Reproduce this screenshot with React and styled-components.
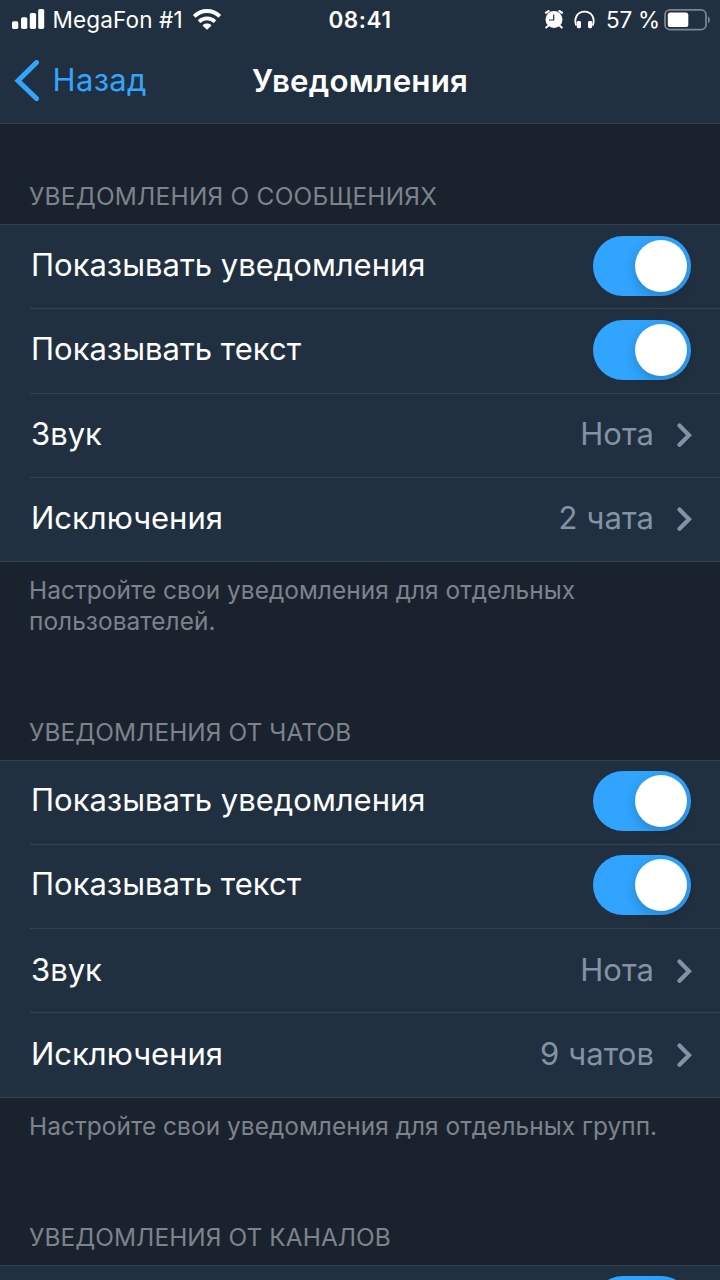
import React from "react";
import styled, { createGlobalStyle } from "styled-components";

const GlobalStyle = createGlobalStyle`
  * { box-sizing: border-box; }
  html, body { margin: 0; background: #1a232d; }
  body {
    font-family: Inter, "Liberation Sans", sans-serif;
    font-feature-settings: "calt" 0;
    -webkit-font-smoothing: antialiased;
  }
`;

const Screen = styled.main`
  width: 720px;
  height: 1280px;
  overflow: hidden;
  background: #1a232d;
  color: #fff;
`;

const Header = styled.header`
  height: 124px;
  background: #213040;
  border-bottom: 1px solid #344352;
`;

const StatusBar = styled.div`
  display: grid;
  grid-template-columns: 1fr auto 1fr;
  align-items: center;
  height: 40px;
  padding: 0 10px;
  font-size: 22.5px;
  line-height: 28px;
`;

const StatusGroup = styled.div`
  display: flex;
  align-items: center;
  justify-content: ${(p) => (p.$end ? "flex-end" : "flex-start")};
  margin-right: ${(p) => (p.$end ? -1 : 0)}px;
`;

const StatusText = styled.span`
  white-space: nowrap;
  margin-left: ${(p) => p.$gap || 0}px;
  letter-spacing: ${(p) => p.$spacing || 0}px;
`;

const Clock = styled.time`
  font-weight: 600;
  letter-spacing: 0.6px;
`;

const Icon = styled.svg`
  display: block;
  flex: none;
  margin-left: ${(p) => p.$gap || 0}px;
`;

const NavBar = styled.nav`
  display: grid;
  grid-template-columns: 1fr auto 1fr;
  align-items: center;
  height: 82px;
  padding: 0 14px;
`;

const BackButton = styled.button`
  display: flex;
  align-items: center;
  gap: 13.5px;
  padding: 0;
  border: 0;
  background: none;
  color: #32a5fd;
  font: inherit;
  font-size: 31px;
  line-height: 40px;
  letter-spacing: 0.35px;
`;

const BackLabel = styled.span`
  padding-bottom: 2px;
`;

const Title = styled.h1`
  margin: 0;
  font-size: 31.3px;
  line-height: 40px;
  font-weight: 600;
  letter-spacing: 0.2px;
`;

const SectionTitle = styled.h2`
  display: flex;
  align-items: flex-end;
  height: 100px;
  margin: 0;
  padding: 0 29px 12px;
  color: #7d838c;
  font-size: 24.4px;
  line-height: 32px;
  font-weight: 400;
  letter-spacing: ${(p) => p.$spacing || 0.08}px;
  text-transform: uppercase;
`;

const Group = styled.div`
  background: #213040;
  border-top: 1px solid #344352;
  border-bottom: ${(p) => (p.$open ? 0 : 1)}px solid #344352;
`;

const Row = styled.div`
  display: flex;
  align-items: center;
  justify-content: space-between;
  height: 84.25px;
  margin-left: 30px;
  padding: 0 29px ${(p) => (p.$link ? 0 : 2)}px 1px;
  border-bottom: 1px solid #344352;
  font-size: 31px;
  line-height: 40px;

  &:last-child {
    height: 83.25px;
    border-bottom: 0;
  }
`;

const RowText = styled.span`
  padding-bottom: 2px;
`;

const RowValue = styled.span`
  display: flex;
  align-items: center;
  gap: 23px;
  margin-right: -1px;
  color: #8194a5;
  letter-spacing: 0.1px;
`;

const Switch = styled.span`
  display: flex;
  justify-content: flex-end;
  flex: none;
  width: 98px;
  height: 60px;
  padding: 4px;
  border-radius: 30px;
  background: #30a4fe;
`;

const Knob = styled.span`
  width: 52px;
  height: 52px;
  border-radius: 50%;
  background: #fff;
  box-shadow: 0 4px 12px rgba(0, 0, 0, 0.2);
`;

const Footnote = styled.p`
  margin: 0;
  padding: 13px 29px 23.5px;
  color: #7d838c;
  font-size: 24.4px;
  line-height: 30.5px;
  letter-spacing: 0.06px;
  white-space: pre-line;
`;

const Toggle = () => (
  <Switch role="switch" aria-checked="true">
    <Knob />
  </Switch>
);

const Chevron = () => (
  <Icon width="15" height="26" viewBox="0 0 15 26" fill="none">
    <path d="M2.5 3.6 12 13.2 2.5 22.8" stroke="#8194a5" strokeWidth="4.2" strokeLinecap="round" />
  </Icon>
);

const Section = ({ title, titleSpacing, exceptions, note }) => (
  <section>
    <SectionTitle $spacing={titleSpacing}>{title}</SectionTitle>
    <Group>
      <Row><RowText>Показывать уведомления</RowText><Toggle /></Row>
      <Row><RowText>Показывать текст</RowText><Toggle /></Row>
      <Row $link>
        <RowText>Звук</RowText>
        <RowValue><RowText>Нота</RowText><Chevron /></RowValue>
      </Row>
      <Row $link>
        <RowText>Исключения</RowText>
        <RowValue><RowText>{exceptions}</RowText><Chevron /></RowValue>
      </Row>
    </Group>
    <Footnote>{note}</Footnote>
  </section>
);

export default function App() {
  return (
    <Screen>
      <GlobalStyle />
      <Header>
        <StatusBar>
          <StatusGroup>
            <Icon $gap={2} width="33" height="22" viewBox="0 0 33 22" fill="#fff">
              <rect x="0" y="12.3" width="6.3" height="7.6" rx="1.6" />
              <rect x="9" y="8.3" width="6.3" height="11.6" rx="1.6" />
              <rect x="17.8" y="4" width="6.3" height="15.9" rx="1.6" />
              <rect x="26.2" y="0" width="6" height="19.9" rx="1.6" />
            </Icon>
            <StatusText $gap={7.5} $spacing={0.15}>MegaFon #1</StatusText>
            <Icon $gap={9} width="30" height="22" viewBox="0 0 30 22" fill="none" stroke="#fff" strokeWidth="3.8">
              <path d="M2.2 7.4C9.5.2 20.5.2 27.8 7.4" />
              <path d="M7 12.6C11.6 8.3 18.4 8.3 23 12.6" strokeWidth="3.6" />
              <path d="M15 20.8 10.5 16.4C12.8 14 17.2 14 19.5 16.4Z" fill="#fff" stroke="none" />
            </Icon>
          </StatusGroup>
          <Clock>08:41</Clock>
          <StatusGroup $end>
            <Icon width="20" height="20" viewBox="0 0 20 20" fill="none">
              <circle cx="10" cy="9.5" r="8.5" fill="#fff" />
              <path d="M2 2.7 4.6 1.1M18 2.7 15.4 1.1" stroke="#fff" strokeWidth="2.2" strokeLinecap="round" />
              <path d="M4 16 2.2 17.6M16 16 17.8 17.6" stroke="#fff" strokeWidth="2" strokeLinecap="round" />
              <path d="M9.7 4.4V10H5" stroke="#213040" strokeWidth="1.2" />
            </Icon>
            <Icon $gap={10.5} width="21" height="20" viewBox="0 0 21 20" fill="none">
              <path d="M2.2 15.5C-.5 8 3.5 1.6 10.5 1.6S21.5 8 18.8 15.5" stroke="#fff" strokeWidth="1.8" />
              <rect x="2.8" y="11" width="4.2" height="7.2" rx="1.4" fill="#fff" />
              <rect x="14" y="11" width="4.2" height="7.2" rx="1.4" fill="#fff" />
            </Icon>
            <StatusText $gap={10.5} $spacing={-0.2}>57 %</StatusText>
            <Icon $gap={4} width="47" height="23" viewBox="0 0 47 23" fill="none">
              <rect x="1" y="0.9" width="41" height="19.8" rx="5" stroke="#7c8590" strokeWidth="1.8" />
              <rect x="3.8" y="3.6" width="20.5" height="14.4" rx="2.6" fill="#fff" />
              <path d="M44 7.4C46.5 8.2 46.5 13.4 44 14.2Z" fill="#7c8590" />
            </Icon>
          </StatusGroup>
        </StatusBar>
        <NavBar>
          <BackButton>
            <Icon width="25" height="42" viewBox="0 0 25 42" fill="none">
              <path d="M22.5 2.5 4 20.8 22.5 38.5" stroke="#32a5fd" strokeWidth="5" strokeLinecap="round" />
            </Icon>
            <BackLabel>Назад</BackLabel>
          </BackButton>
          <Title>Уведомления</Title>
        </NavBar>
      </Header>
      <Section
        title="Уведомления о сообщениях"
        titleSpacing={0.25}
        exceptions="2 чата"
        note={"Настройте свои уведомления для отдельных\nпользователей."}
      />
      <Section title="Уведомления от чатов" exceptions="9 чатов" note="Настройте свои уведомления для отдельных групп." />
      <section>
        <SectionTitle>Уведомления от каналов</SectionTitle>
        <Group $open>
          <Row><span /><Toggle /></Row>
        </Group>
      </section>
    </Screen>
  );
}
